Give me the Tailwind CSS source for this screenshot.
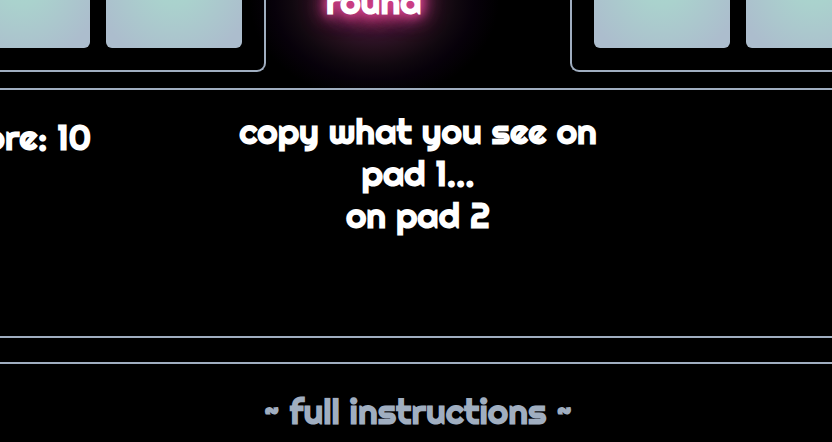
<!DOCTYPE html>
<html lang="en">
<head>
<meta charset="utf-8">
<title>Memory pads</title>
<script src="https://cdn.jsdelivr.net/npm/@tailwindcss/browser@4"></script>
</head>
<body class="h-[442px] w-[832px] overflow-hidden bg-black font-['Righteous','Inter',sans-serif] text-[35.2px] leading-[42px] font-bold text-white [font-feature-settings:'cv11']">
<header class="flex h-[88px] items-start bg-[radial-gradient(ellipse_125px_100px_at_374px_0px,#58213f_0%,#4a1b35_22%,#32142a_36%,#220f1b_50%,#10080f_66%,#07010a_80%,#000_100%)]">
  <div class="flex h-[72px] w-[266px] shrink-0 items-end justify-end gap-4 overflow-hidden rounded-br-[9px] border-r-2 border-b-2 border-[#a0aec0] pr-[22px] pb-[22px]">
    <div class="h-[136px] w-[136px] shrink-0 rounded-md bg-[radial-gradient(circle,#a9d6cd_0%,#aad2cd_25%,#acbdcd_85%)]"></div>
    <div class="h-[136px] w-[136px] shrink-0 rounded-md bg-[radial-gradient(circle,#a9d6cd_0%,#aad2cd_25%,#acbdcd_85%)]"></div>
  </div>
  <div class="flex h-[22px] w-[304px] items-end pl-[60px]">
    <span class="[text-shadow:0_0_10px_#d6438c,0_0_14px_#d6438c,0_0_20px_#d6438c,0_0_24px_#c84088c0]">round</span>
  </div>
  <div class="flex h-[72px] w-[262px] shrink-0 items-end gap-4 overflow-hidden rounded-bl-[9px] border-b-2 border-l-2 border-[#a0aec0] pb-[22px] pl-[22px]">
    <div class="h-[136px] w-[136px] shrink-0 rounded-md bg-[radial-gradient(circle,#a9d6cd_0%,#aad2cd_25%,#acbdcd_85%)]"></div>
    <div class="h-[136px] w-[136px] shrink-0 rounded-md bg-[radial-gradient(circle,#a9d6cd_0%,#aad2cd_25%,#acbdcd_85%)]"></div>
  </div>
</header>
<main class="flex h-[250px] border-y-2 border-[#a0aec0] pt-5">
  <div class="flex w-[217px] justify-end pt-[6px] pr-[126px] whitespace-nowrap"><span>score: 10</span></div>
  <div class="w-[402px] shrink-0 text-center whitespace-nowrap">
    <p>copy what you see on</p>
    <p>pad 1...</p>
    <p>on pad 2</p>
  </div>
</main>
<footer class="mt-6 border-t-2 border-[#a0aec0] pt-[26px] pl-1 text-center text-[#a0aec0]">~ full instructions ~</footer>
</body>
</html>
